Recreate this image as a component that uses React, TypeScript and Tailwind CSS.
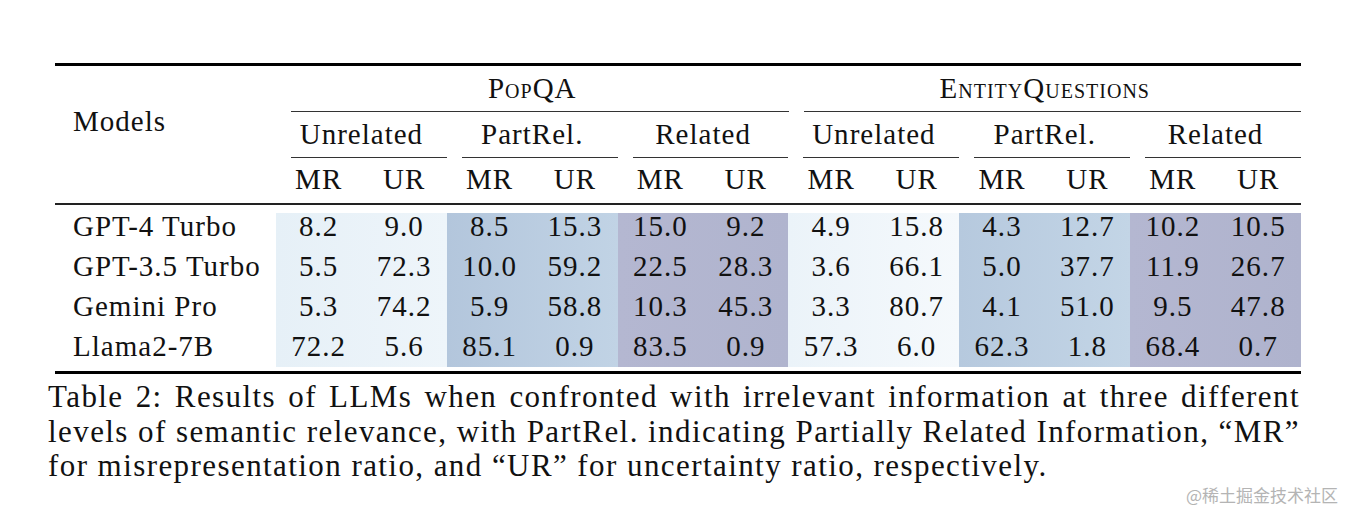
const rows = [
  { name: "GPT-4 Turbo", v: ["8.2", "9.0", "8.5", "15.3", "15.0", "9.2", "4.9", "15.8", "4.3", "12.7", "10.2", "10.5"] },
  { name: "GPT-3.5 Turbo", v: ["5.5", "72.3", "10.0", "59.2", "22.5", "28.3", "3.6", "66.1", "5.0", "37.7", "11.9", "26.7"] },
  { name: "Gemini Pro", v: ["5.3", "74.2", "5.9", "58.8", "10.3", "45.3", "3.3", "80.7", "4.1", "51.0", "9.5", "47.8"] },
  { name: "Llama2-7B", v: ["72.2", "5.6", "85.1", "0.9", "83.5", "0.9", "57.3", "6.0", "62.3", "1.8", "68.4", "0.7"] },
];

const groups = [
  { label: "Unrelated", bg: "bg-linear-to-r from-[#e6f0f7] to-[#eef5fa]" },
  { label: "PartRel.", bg: "bg-linear-to-r from-[#b3c6dc] to-[#c1d3e5]" },
  { label: "Related", bg: "bg-linear-to-r from-[#b4b7d1] to-[#b0b4ce]" },
  { label: "Unrelated", bg: "bg-linear-to-r from-[#ebf3f9] to-[#f5f9fc]" },
  { label: "PartRel.", bg: "bg-linear-to-r from-[#b6c9de] to-[#c3d5e6]" },
  { label: "Related", bg: "bg-linear-to-r from-[#b4b7d1] to-[#afb3cd]" },
];

const serif = "font-['Liberation_Serif','Times_New_Roman',serif]";

export default function App() {
  return (
    <div className={`relative w-[1346px] h-[518px] overflow-hidden bg-white text-[#111] ${serif}`}>
      <div className="ml-[55px] w-[1246px] pt-[63px] text-[29px] tracking-[0.035em]">
        <div className="h-[3px] bg-black" />

        {/* header */}
        <div className="flex h-[137px]">
          <div className="w-[221px] pl-[18px] pt-[35px] leading-[40px]">Models</div>
          <div className="flex-1 flex flex-col">
            <div className="flex h-[46px]">
              {["PopQA", "EntityQuestions"].map((t) => (
                <div key={t} className="flex-1 flex flex-col">
                  <div className="flex-1 flex items-center justify-center [font-variant:small-caps]">{t}</div>
                  <div className="ml-[15px] h-px bg-[#333]" />
                </div>
              ))}
            </div>
            <div className="flex h-[46px]">
              {groups.map((g, i) => (
                <div key={i} className="flex-1 flex flex-col">
                  <div className="flex-1 flex items-center justify-center">{g.label}</div>
                  <div className="ml-[15px] h-px bg-[#333]" />
                </div>
              ))}
            </div>
            <div className="flex h-[45px] pb-[3px]">
              {groups.map((g, i) => (
                <div key={i} className="flex-1 grid grid-cols-2">
                  <div className="flex items-center justify-center">MR</div>
                  <div className="flex items-center justify-center">UR</div>
                </div>
              ))}
            </div>
          </div>
        </div>
        <div className="h-[1.5px] bg-[#222]" />

        {/* body */}
        <div className="flex pt-[8.5px] pb-[4px]">
          <div className="w-[221px] h-[154px] pl-[18px]">
            <div className="-mt-[7px]">
              {rows.map((r) => (
                <div key={r.name} className="h-10 leading-[40px] whitespace-nowrap">{r.name}</div>
              ))}
            </div>
          </div>
          {groups.map((g, gi) => (
            <div key={gi} className={`flex-1 h-[154px] ${g.bg}`}>
              <div className="-mt-[7px]">
                {rows.map((r) => (
                  <div key={r.name} className="h-10 leading-[40px] grid grid-cols-2 text-center">
                    <div>{r.v[gi * 2]}</div>
                    <div>{r.v[gi * 2 + 1]}</div>
                  </div>
                ))}
              </div>
            </div>
          ))}
        </div>
        <div className="h-[3px] bg-black" />
      </div>

      {/* caption, justified like the LaTeX source */}
      <div className="ml-[48px] mt-[6px] w-[1252px] text-[31px] leading-[34.5px] tracking-[0.046em]">
        <p className="whitespace-nowrap text-justify [text-align-last:justify]">Table 2: Results of LLMs when confronted with irrelevant information at three different</p>
        <p className="whitespace-nowrap text-justify [text-align-last:justify]">levels of semantic relevance, with PartRel. indicating Partially Related Information, “MR”</p>
        <p className="whitespace-nowrap">for misrepresentation ratio, and “UR” for uncertainty ratio, respectively.</p>
      </div>

      <div className="absolute right-[8px] bottom-[11px] text-[17px] text-[#b4b4b4] font-['Noto_Sans_CJK_SC',sans-serif]">
        @稀土掘金技术社区
      </div>
    </div>
  );
}
